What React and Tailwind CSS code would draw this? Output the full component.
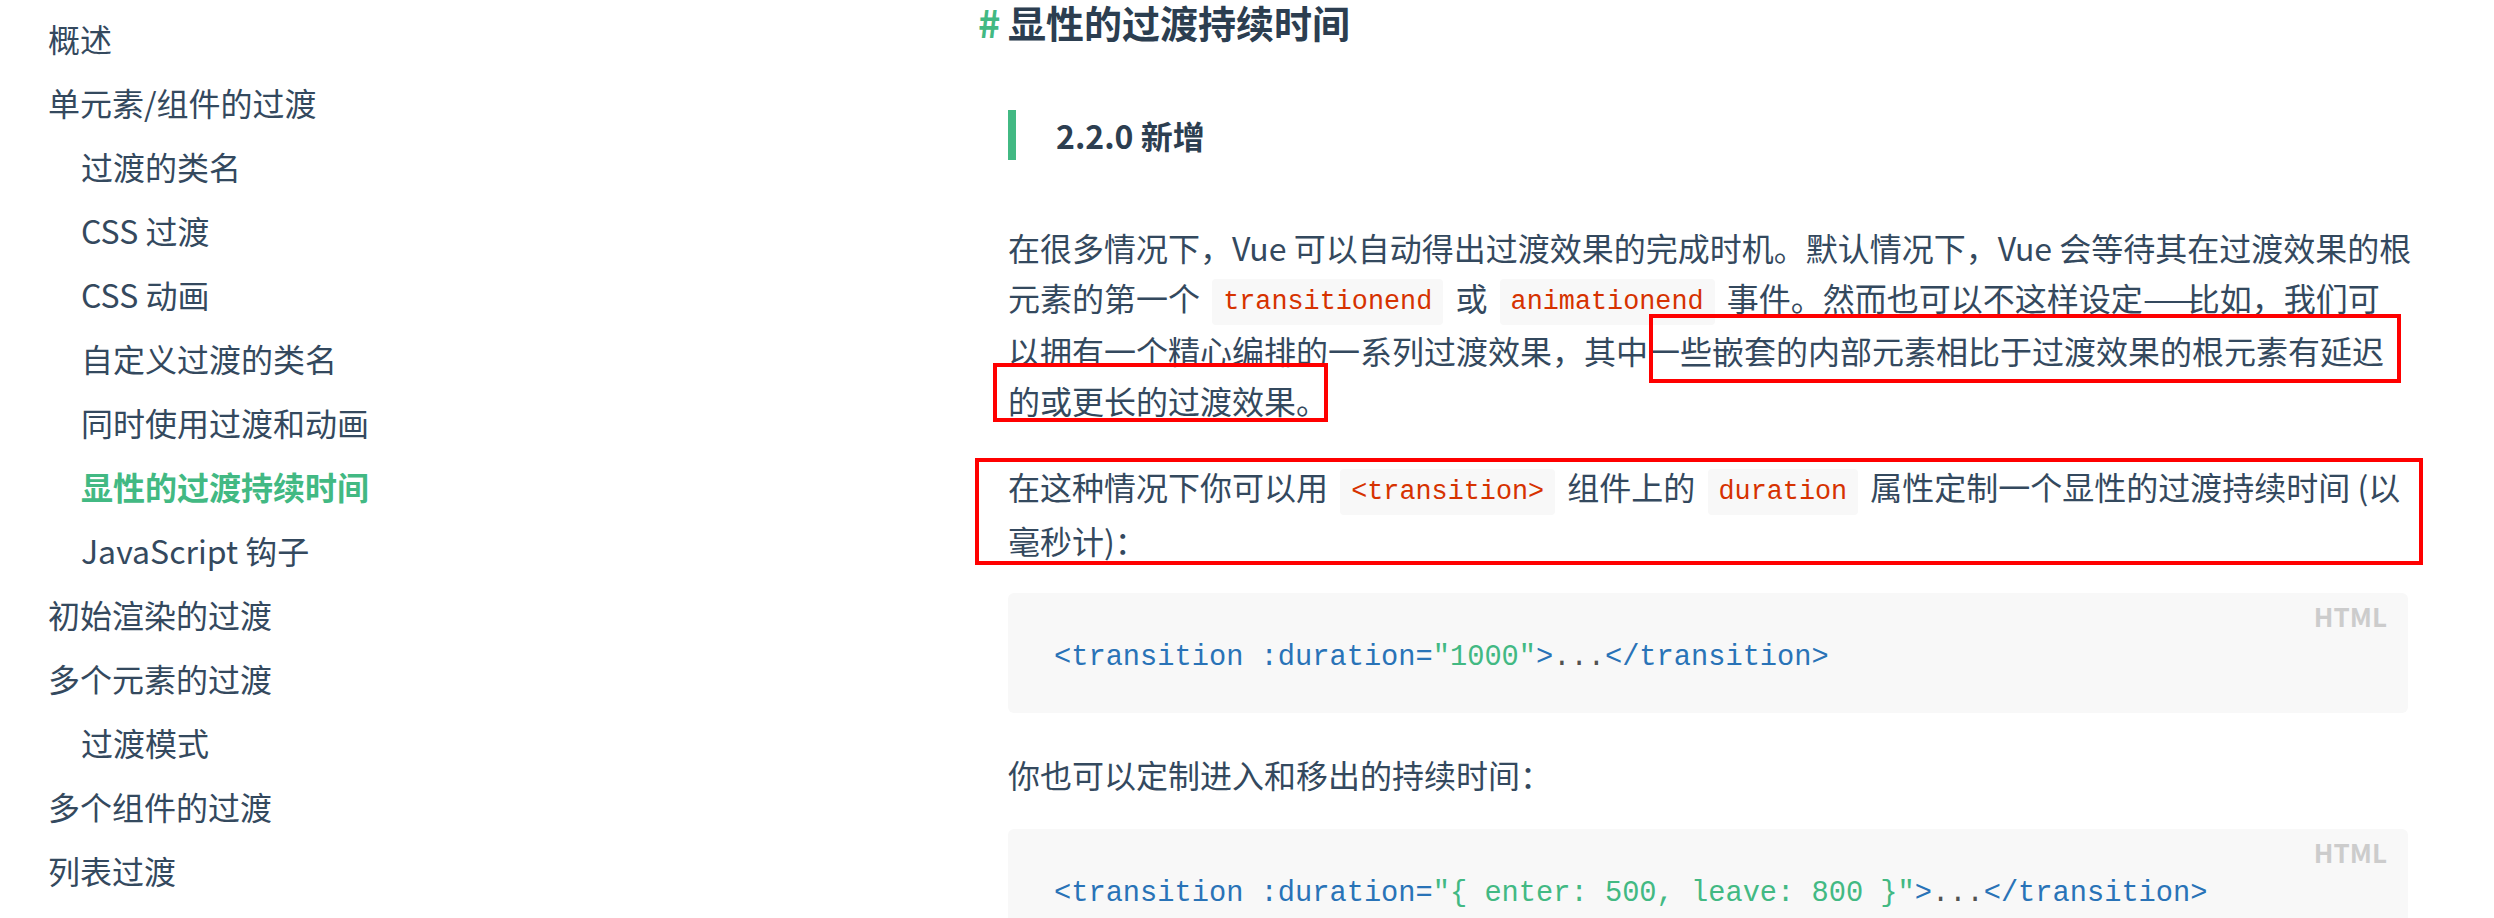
import React from 'react'

const nav = [
  { label: '概述', sub: false },
  { label: '单元素/组件的过渡', sub: false },
  { label: '过渡的类名', sub: true },
  { label: 'CSS 过渡', sub: true },
  { label: 'CSS 动画', sub: true },
  { label: '自定义过渡的类名', sub: true },
  { label: '同时使用过渡和动画', sub: true },
  { label: '显性的过渡持续时间', sub: true, active: true },
  { label: 'JavaScript 钩子', sub: true },
  { label: '初始渲染的过渡', sub: false },
  { label: '多个元素的过渡', sub: false },
  { label: '过渡模式', sub: true },
  { label: '多个组件的过渡', sub: false },
  { label: '列表过渡', sub: false },
]

function Code({ children }) {
  return (
    <code className="inline-block h-[46px] leading-[46px] align-middle mx-[5px] px-[11px] rounded-[4px] bg-[#f8f8f8] text-[#d63200] text-[26.8px] font-['Liberation_Mono',monospace]">
      {children}
    </code>
  )
}

function CodeBlock({ children }) {
  return (
    <div className="relative h-[120px] rounded-[6px] bg-[#f8f8f8] flex items-center pl-[46px] pt-[10px]">
      <span className="absolute top-[10px] right-[21px] leading-none text-[26px] font-semibold text-[#cccccc]">HTML</span>
      <pre className="text-[28.7px] font-['Liberation_Mono',monospace] text-[#2973b7] whitespace-pre">{children}</pre>
    </div>
  )
}

export default function App() {
  return (
    <div className="relative w-[2494px] h-[918px] overflow-hidden bg-white flex font-['Noto_Sans_CJK_SC','Noto_Sans',sans-serif] text-[#34495e]">
      <aside className="w-[1008px] shrink-0 pt-[6px]">
        {nav.map((item) => (
          <div key={item.label}
            className={`h-[64px] leading-[64px] text-[32px] whitespace-nowrap ${item.sub ? 'pl-[81px]' : 'pl-[48px]'} ${item.active ? 'text-[#42b983] font-semibold' : ''}`}>
            {item.label}
          </div>
        ))}
      </aside>

      <main className="w-[1400px] shrink-0 pt-[2px]">
        <h3 className="-ml-[30px] flex h-[44px] leading-[44px] -mt-[2px] text-[38px] font-semibold text-[#2c3e50] whitespace-nowrap">
          <span className="w-[30px] text-[#42b983]">#</span>显性的过渡持续时间
        </h3>

        <blockquote className="mt-[66px] h-[50px] leading-[50px] border-l-[8px] border-[#42b983] pl-[40px] text-[32px] font-semibold text-[#2c3e50]">
          2.2.0 新增
        </blockquote>

        <div className="mt-[62px] text-[32px] leading-[50px] whitespace-nowrap">
          <div>在很多情况下，Vue 可以自动得出过渡效果的完成时机。默认情况下，Vue 会等待其在过渡效果的根</div>
          <div>
            元素的第一个 <Code>transitionend</Code> 或 <Code>animationend</Code> 事件。然而也可以不这样设定
            <span className="inline-block w-[45px] align-top"><span className="inline-block origin-left scale-x-[1.12]">——</span></span>
            比如，我们可
          </div>
          <div>以拥有一个精心编排的一系列过渡效果，其中一些嵌套的内部元素相比于过渡效果的根元素有延迟</div>
          <div>的或更长的过渡效果。</div>
        </div>

        <div className="mt-[36px] text-[32px] leading-[50px] whitespace-nowrap">
          <div>在这种情况下你可以用 <Code>&lt;transition&gt;</Code> 组件上的 <Code>duration</Code> 属性定制一个显性的过渡持续时间 (以</div>
          <div>毫秒计)：</div>
        </div>

        <div className="mt-[28px]">
          <CodeBlock>
            &lt;transition :duration=<span className="text-[#42b983]">"1000"</span>&gt;<span className="text-[#525252]">...</span>&lt;/transition&gt;
          </CodeBlock>
        </div>

        <div className="mt-[36px] text-[32px] leading-[50px] whitespace-nowrap">
          你也可以定制进入和移出的持续时间：
        </div>

        <div className="mt-[30px]">
          <CodeBlock>
            &lt;transition :duration=<span className="text-[#42b983]">"{'{'} enter: 500, leave: 800 {'}'}"</span>&gt;<span className="text-[#525252]">...</span>&lt;/transition&gt;
          </CodeBlock>
        </div>
      </main>

      {/* red annotation boxes drawn over the text */}
      <div className="absolute left-[1649px] top-[314px] w-[752px] h-[69px] border-[4px] border-[#ff0000]" />
      <div className="absolute left-[993px] top-[363px] w-[335px] h-[59px] border-[4px] border-[#ff0000]" />
      <div className="absolute left-[975px] top-[458px] w-[1448px] h-[107px] border-[4px] border-[#ff0000]" />
    </div>
  )
}
